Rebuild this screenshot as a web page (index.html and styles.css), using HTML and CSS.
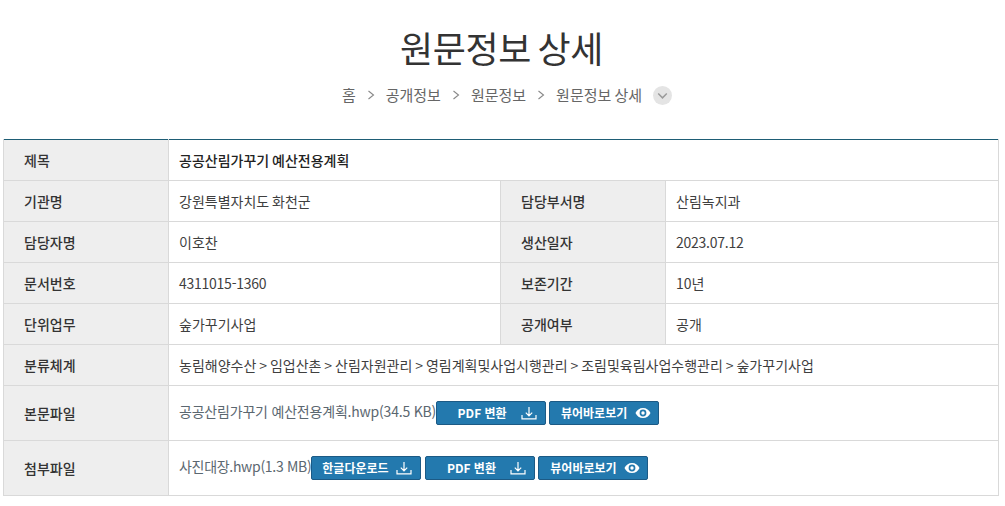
FILE: index.html
```html
<!DOCTYPE html>
<html lang="ko">
<head>
<meta charset="utf-8">
<title>원문정보 상세</title>
<link rel="stylesheet" href="styles.css">
</head>
<body>
<header class="head">
  <h1 class="title">원문정보 상세</h1>
  <nav class="crumbs">
    <span>홈</span>
    <svg class="sep" viewBox="0 0 8 10"><path d="M1.5 1 6.500 5 1.500 9"/></svg>
    <span>공개정보</span>
    <svg class="sep" viewBox="0 0 8 10"><path d="M1.5 1 6.500 5 1.500 9"/></svg>
    <span>원문정보</span>
    <svg class="sep" viewBox="0 0 8 10"><path d="M1.5 1 6.500 5 1.500 9"/></svg>
    <span>원문정보 상세</span>
    <span class="more"><svg viewBox="0 0 20 20"><path d="M5.500 8 10 12.500 14.500 8"/></svg></span>
  </nav>
</header>
<svg class="defs" aria-hidden="true">
  <symbol id="dl" viewBox="0 0 16 14"><path d="M8 1v8.500M4.800 6.600 8 9.800l3.200-3.200M1 9v3.800h14V9"/></symbol>
  <symbol id="eye" viewBox="0 0 16 12"><path class="fill" fill-rule="evenodd" d="M8 1C4.600 1 1.800 3 .5 6c1.300 3 4.100 5 7.500 5s6.200-2 7.500-5C14.200 3 11.400 1 8 1zm0 1.600a3.400 3.400 0 1 1 0 6.800 3.400 3.400 0 0 1 0-6.800zM8 4.300a1.700 1.700 0 1 0 0 3.400 1.700 1.700 0 0 0 0-3.400z"/></symbol>
</svg>
<table class="info">
  <colgroup><col class="c1"><col class="c2"><col class="c3"><col class="c4"></colgroup>
  <tbody>
    <tr><th>제목</th><td colspan="3" class="strong">공공산림가꾸기 예산전용계획</td></tr>
    <tr><th>기관명</th><td>강원특별자치도 화천군</td><th>담당부서명</th><td>산림녹지과</td></tr>
    <tr><th>담당자명</th><td>이호찬</td><th>생산일자</th><td class="num">2023.07.12</td></tr>
    <tr><th>문서번호</th><td class="num">4311015-1360</td><th>보존기간</th><td>10년</td></tr>
    <tr><th>단위업무</th><td>숲가꾸기사업</td><th>공개여부</th><td>공개</td></tr>
    <tr><th>분류체계</th><td colspan="3">농림해양수산 &gt; 임업산촌 &gt; 산림자원관리 &gt; 영림계획및사업시행관리 &gt; 조림및육림사업수행관리 &gt; 숲가꾸기사업</td></tr>
    <tr class="file"><th>본문파일</th><td colspan="3"><div class="files">
      <span class="fname">공공산림가꾸기 예산전용계획.hwp(34.5 KB)</span>
      <a class="btn wide">PDF 변환<svg class="ic"><use href="#dl"/></svg></a>
      <a class="btn view">뷰어바로보기<svg class="ic eye"><use href="#eye"/></svg></a>
    </div></td></tr>
    <tr class="file"><th>첨부파일</th><td colspan="3"><div class="files">
      <span class="fname tight">사진대장.hwp(1.3 MB)</span>
      <a class="btn hangul">한글다운로드<svg class="ic"><use href="#dl"/></svg></a>
      <a class="btn wide">PDF 변환<svg class="ic"><use href="#dl"/></svg></a>
      <a class="btn view">뷰어바로보기<svg class="ic eye"><use href="#eye"/></svg></a>
    </div></td></tr>
  </tbody>
</table>
</body>
</html>
```
FILE: styles.css
```css
* { box-sizing: border-box; }
html, body { margin: 0; padding: 0; background: #fff; }
body {
  width: 1005px;
  padding: 0 7px 0 3px;
  font-family: "Noto Sans CJK KR", "Noto Sans", sans-serif;
  font-size: 14px;
  color: #333;
}
.head { height: 139px; padding-top: 21px; text-align: center; }
.title {
  margin: 0;
  height: 52px;
  font-size: 36px;
  line-height: 52px;
  font-weight: 400;
  color: #333;
  letter-spacing: -0.4px;
  word-spacing: -3px;
  padding-left: 2px;
}
.crumbs {
  display: flex;
  justify-content: center;
  align-items: center;
  height: 22px;
  margin-top: 11px;
  padding-left: 13px;
  color: #666;
  font-size: 15px;
  line-height: 22px;
  word-spacing: -1px;
}
.sep { width: 8px; height: 10px; margin: 0 11px; fill: none; stroke: #888; stroke-width: 1.1; }
.more {
  width: 19px; height: 19px; margin-left: 11px;
  border-radius: 50%;
  background: #e4e4e4;
  display: flex;
}
.more svg { width: 19px; height: 19px; fill: none; stroke: #999; stroke-width: 1.5; }
.defs { display: none; }
.info {
  width: 995px;
  border-collapse: collapse;
  table-layout: fixed;
  border-top: 1px solid #1e5d75;
}
.c1 { width: 165px; } .c2 { width: 332px; } .c3 { width: 165px; } .c4 { width: 333px; }
.info th, .info td {
  height: 41px;
  padding: 0 10px;
  border: 1px solid #d9d9d9;
  text-align: left;
  font-size: 14px;
  line-height: 20px;
  vertical-align: middle;
}
.info tr:first-child th, .info tr:first-child td { border-top: 0; }
.info th { padding-left: 20px; background: #eee; font-weight: 500; color: #333; }
.info td { color: #3f3f3f; font-weight: 400; word-spacing: -1px; }
.info td.num { letter-spacing: -0.25px; }
.info td.strong { font-weight: 500; color: #222; }
.info .file th, .info .file td { height: 55px; }
.files { display: flex; align-items: center; word-spacing: 0; }
.fname { color: #5b6770; white-space: nowrap; letter-spacing: -0.2px; word-spacing: 0; padding-bottom: 4px; }
.fname.tight { letter-spacing: -0.3px; }
.btn {
  display: flex;
  align-items: center;
  justify-content: center;
  position: relative;
  flex: none;
  width: 110px;
  height: 24px;
  margin-right: 3px;
  border: 1px solid #1c5a85;
  border-radius: 2px;
  background: #2379ae;
  color: #fff;
  font-size: 12px;
  font-weight: 700;
  white-space: nowrap;
  word-spacing: 0;
}
.wide { padding-right: 18px; }
.view { padding-right: 20px; }
.hangul { margin-right: 4px; padding-right: 22px; }
.ic {
  position: absolute;
  right: 8px;
  top: 4px;
  width: 16px;
  height: 14px;
  fill: none;
  stroke: #fff;
  stroke-width: 1.2;
}
.ic.eye { right: 7px; top: 5px; height: 12px; stroke: none; fill: #fff; }
```
